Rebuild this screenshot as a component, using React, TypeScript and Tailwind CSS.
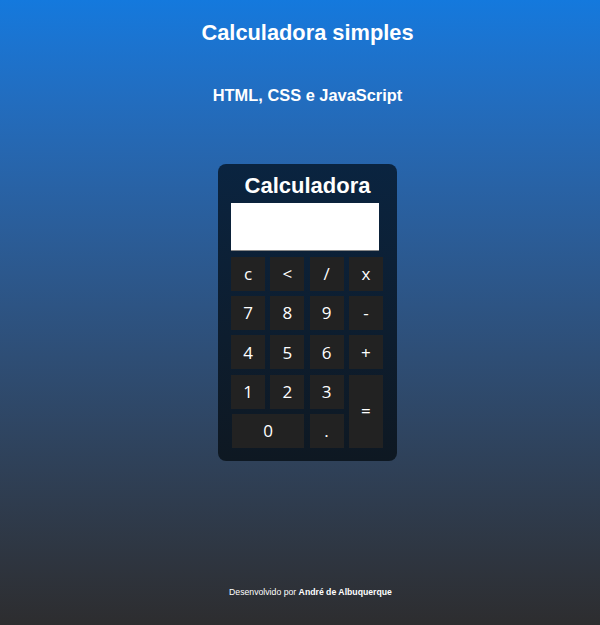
import React from "react";

const Btn = ({ label, className = "" }: { label: string; className?: string }) => (
  <button
    className={`bg-[#222222] text-white text-[17px] flex items-center justify-center ${className}`}
    style={{ fontFamily: '"Open Sans", sans-serif' }}
  >
    {label}
  </button>
);

export default function App() {
  return (
    <div
      className="w-[600px] h-[625px] pl-[15px] flex flex-col items-center bg-gradient-to-b from-[#1479dd] to-[#2d2d2f] text-white"
      style={{ fontFamily: '"Liberation Sans", Arial, sans-serif' }}
    >
      <h1 className="mt-[19px] text-[21.8px] leading-[28px] font-bold">Calculadora simples</h1>
      <h2 className="mt-[37px] text-[16.4px] leading-[22px] font-bold">HTML, CSS e JavaScript</h2>
      <div className="mt-[58px] w-[179px] h-[297px] rounded-[8px] bg-gradient-to-b from-[#0a2440] to-[#0e1822] flex flex-col items-start pl-[13px]">
        <div className="mt-[9px] self-center -ml-[13px] text-[22px] leading-[26px] font-bold">Calculadora</div>
        <div className="mt-[4px] w-[148px] h-[48px] bg-white border-b border-[#888]"></div>
        <div className="mt-[6px] grid grid-cols-[34px_34px_34px_34px] grid-rows-[34px_34px_34px_34px_34px] gap-x-[5.3px] gap-y-[5.2px]">
          <Btn label="c" />
          <Btn label="<" />
          <Btn label="/" />
          <Btn label="x" />
          <Btn label="7" />
          <Btn label="8" />
          <Btn label="9" />
          <Btn label="-" />
          <Btn label="4" />
          <Btn label="5" />
          <Btn label="6" />
          <Btn label="+" />
          <Btn label="1" />
          <Btn label="2" />
          <Btn label="3" />
          <Btn label="=" className="row-span-2" />
          <Btn label="0" className="col-span-2 ml-[1px]" />
          <Btn label="." />
        </div>
      </div>
      <div className="mt-[125px] ml-[6px] text-[8.7px] leading-[12px]">
        Desenvolvido por <b>André de Albuquerque</b>
      </div>
    </div>
  );
}
